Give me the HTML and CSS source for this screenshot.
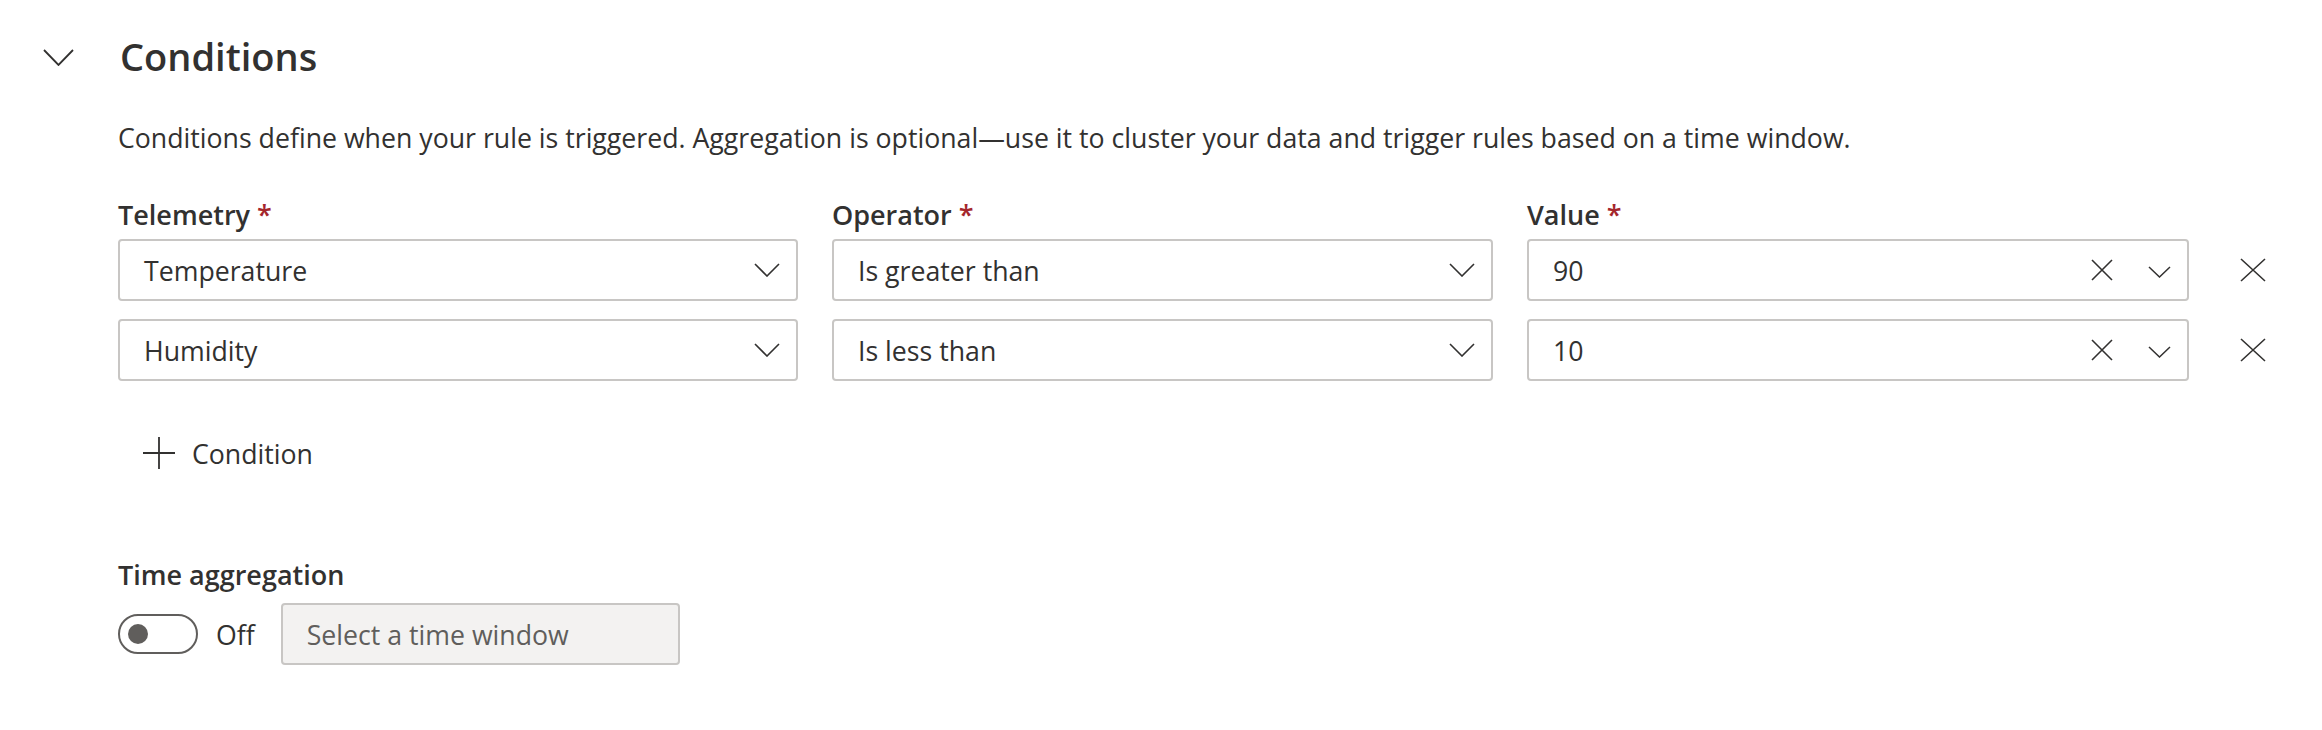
FILE: index.html
```html
<!DOCTYPE html>
<html lang="en">
<head>
<meta charset="utf-8">
<title>Conditions</title>
<link rel="stylesheet" href="styles.css">
</head>
<body>
<div class="page">
  <div class="header">
    <svg class="collapse" width="31" height="17" viewBox="0 0 31 17"><polyline points="1,1 15.5,16 30,1" fill="none" stroke="#323130" stroke-width="1.8"/></svg>
    <h2 class="title">Conditions</h2>
  </div>
  <div class="content">
    <p class="desc">Conditions define when your rule is triggered. Aggregation is optional—use it to cluster your data and trigger rules based on a time window.</p>
    <div class="grid labels">
      <div class="label">Telemetry <span class="req">*</span></div>
      <div class="label">Operator <span class="req">*</span></div>
      <div class="label">Value <span class="req">*</span></div>
      <div></div>
    </div>
    <div class="grid rows">
      <div class="field"><span class="text">Temperature</span>
        <svg class="chev" width="26" height="14" viewBox="0 0 26 14"><polyline points="1,1 13,13 25,1" fill="none" stroke="#323130" stroke-width="1.6"/></svg></div>
      <div class="field"><span class="text">Is greater than</span>
        <svg class="chev" width="26" height="14" viewBox="0 0 26 14"><polyline points="1,1 13,13 25,1" fill="none" stroke="#323130" stroke-width="1.6"/></svg></div>
      <div class="field value"><span class="text">90</span>
        <svg class="clear" width="22" height="22" viewBox="0 0 22 22"><path d="M1 1L21 21M21 1L1 21" stroke="#323130" stroke-width="1.6"/></svg>
        <svg class="chev small" width="23" height="12" viewBox="0 0 23 12"><polyline points="1,1 11.5,11 22,1" fill="none" stroke="#323130" stroke-width="1.5"/></svg></div>
      <div class="remove"><svg width="26" height="24" viewBox="0 0 26 24"><path d="M1 1L25 23M25 1L1 23" stroke="#323130" stroke-width="1.6"/></svg></div>

      <div class="field"><span class="text">Humidity</span>
        <svg class="chev" width="26" height="14" viewBox="0 0 26 14"><polyline points="1,1 13,13 25,1" fill="none" stroke="#323130" stroke-width="1.6"/></svg></div>
      <div class="field"><span class="text">Is less than</span>
        <svg class="chev" width="26" height="14" viewBox="0 0 26 14"><polyline points="1,1 13,13 25,1" fill="none" stroke="#323130" stroke-width="1.6"/></svg></div>
      <div class="field value"><span class="text">10</span>
        <svg class="clear" width="22" height="22" viewBox="0 0 22 22"><path d="M1 1L21 21M21 1L1 21" stroke="#323130" stroke-width="1.6"/></svg>
        <svg class="chev small" width="23" height="12" viewBox="0 0 23 12"><polyline points="1,1 11.5,11 22,1" fill="none" stroke="#323130" stroke-width="1.5"/></svg></div>
      <div class="remove"><svg width="26" height="24" viewBox="0 0 26 24"><path d="M1 1L25 23M25 1L1 23" stroke="#323130" stroke-width="1.6"/></svg></div>
    </div>
    <div class="add">
      <svg width="32" height="32" viewBox="0 0 32 32"><path d="M16 0V32M0 16H32" stroke="#323130" stroke-width="1.8"/></svg>
      <span>Condition</span>
    </div>
    <div class="label agg-label">Time aggregation</div>
    <div class="agg">
      <div class="toggle"><div class="thumb"></div></div>
      <span class="off">Off</span>
      <div class="window">Select a time window</div>
    </div>
  </div>
</div>
</body>
</html>
```

FILE: styles.css
```css
html, body {
  margin: 0;
  padding: 0;
  background: #ffffff;
}
body {
  font-family: "Open Sans", "Noto Sans", sans-serif;
  color: #323130;
}
.page {
  padding: 30px 0 0 43px;
}
.header {
  display: flex;
  align-items: center;
  height: 52px;
}
.collapse {
  display: block;
  margin-top: 2px;
}
.title {
  margin: 0 0 0 46px;
  font-size: 38px;
  font-weight: 600;
  line-height: 52px;
}
.content {
  margin-left: 75px;
}
.desc {
  margin: 38px 0 0 0;
  font-size: 26.7px;
  line-height: 36px;
}
.grid {
  display: grid;
  grid-template-columns: 680px 661px 662px 60px;
  column-gap: 34px;
}
.labels {
  margin-top: 41px;
  margin-bottom: 6px;
}
.label {
  font-size: 27px;
  font-weight: 600;
  line-height: 36px;
}
.req {
  color: #a4262c;
  font-weight: 600;
}
.rows {
  row-gap: 18px;
}
.field {
  box-sizing: border-box;
  height: 62px;
  border: 2px solid #c8c6c4;
  border-radius: 4px;
  display: flex;
  align-items: center;
  padding: 0 16px 0 24px;
  font-size: 26.7px;
}
.field .text {
  flex: 1;
}
.chev {
  display: block;
}
.chev.small {
  margin-top: 4px;
}
.clear {
  display: block;
  margin-right: 35px;
}
.remove {
  display: flex;
  align-items: center;
  padding-left: 17px;
}
.remove svg {
  display: block;
}
.add {
  display: flex;
  align-items: center;
  height: 64px;
  margin-top: 40px;
  padding-left: 25px;
  gap: 17px;
  font-size: 26.7px;
}
.add svg {
  display: block;
}
.agg-label {
  margin-top: 72px;
}
.agg {
  display: flex;
  align-items: center;
  margin-top: 10px;
}
.toggle {
  box-sizing: border-box;
  width: 80px;
  height: 40px;
  border: 2px solid #605e5c;
  border-radius: 20px;
  display: flex;
  align-items: center;
  padding-left: 8px;
}
.thumb {
  width: 20px;
  height: 20px;
  border-radius: 50%;
  background: #605e5c;
}
.off {
  margin-left: 18px;
  font-size: 26.7px;
}
.window {
  box-sizing: border-box;
  margin-left: 26px;
  width: 399px;
  height: 62px;
  background: #f3f2f1;
  border: 2px solid #c8c6c4;
  border-radius: 4px;
  display: flex;
  align-items: center;
  padding-left: 24px;
  font-size: 26.7px;
  color: #605e5c;
}
```
